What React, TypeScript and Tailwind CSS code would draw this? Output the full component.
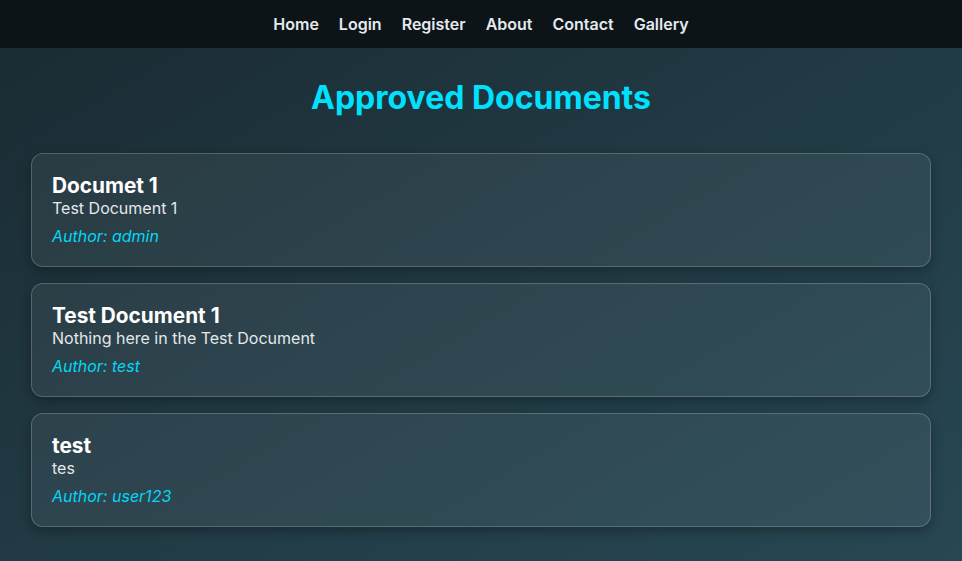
export default function App() {
  const docs = [
    { title: "Documet 1", body: "Test Document 1", author: "admin" },
    { title: "Test Document 1", body: "Nothing here in the Test Document", author: "test" },
    { title: "test", body: "tes", author: "user123" },
  ];

  return (
    <div
      className="min-h-screen bg-linear-to-br from-[#1a2a32] via-[#213a44] to-[#274753] text-[#f1f5f9]"
      style={{ fontFamily: "Inter, 'Liberation Sans', sans-serif" }}
    >
      {/* NAV */}
      <nav className="h-12 bg-[#0c1418] flex items-center justify-center gap-5 text-base font-semibold text-[#e5e9ee]">
        <a href="#">Home</a>
        <a href="#">Login</a>
        <a href="#">Register</a>
        <a href="#">About</a>
        <a href="#">Contact</a>
        <a href="#">Gallery</a>
      </nav>

      <main className="px-[31px] pb-8">
        <h1 className="mt-[31px] mb-[36px] text-[32px] leading-[38px] font-bold text-[#00e1ff] text-center">
          Approved Documents
        </h1>

        <section className="flex flex-col gap-4">
          {docs.map((d) => (
            <DocCard key={d.title} {...d} />
          ))}
        </section>
      </main>
    </div>
  );
}

function DocCard({ title, body, author }: { title: string; body: string; author: string }) {
  return (
    <div className="rounded-xl border border-white/20 bg-white/[0.06] px-5 pt-5 pb-[19px] shadow-[0_4px_12px_rgba(0,0,0,0.3)]">
      <h3 className="text-[20.8px] leading-[23px] font-bold text-white">{title}</h3>
      <p className="text-base leading-[22px] text-[#e3e8ec]">{body}</p>
      <p className="mt-[6px] text-base leading-[22px] italic text-[#00d8f5]">Author: {author}</p>
    </div>
  );
}
